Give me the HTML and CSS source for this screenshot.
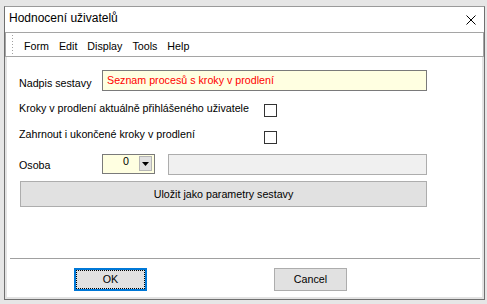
FILE: index.html
```html
<!DOCTYPE html>
<html lang="cs">
<head>
    <meta charset="UTF-8">
    <title>Hodnocení uživatelů</title>
    <link rel="stylesheet" href="styles.css">
</head>
<body>
    <div class="window">
        <div class="titlebar">
            <span class="title">Hodnocení uživatelů</span>
            <svg class="close" width="10" height="10" viewBox="0 0 10 10">
                <path d="M0.5 0.5 L9.5 9.5 M9.5 0.5 L0.5 9.5" stroke="#000" stroke-width="1" fill="none"/>
            </svg>
        </div>

        <div class="menubar">
            <span class="grip"></span>
            <span class="menu-item">Form</span>
            <span class="menu-item">Edit</span>
            <span class="menu-item">Display</span>
            <span class="menu-item">Tools</span>
            <span class="menu-item">Help</span>
        </div>

        <div class="client">
            <div class="content">
                <div class="row row-name">
                    <span class="label">Nadpis sestavy</span>
                    <div class="field field-name">Seznam procesů s kroky v prodlení</div>
                </div>

                <div class="row row-check">
                    <span class="label label-check">Kroky v prodlení aktuálně přihlášeného uživatele</span>
                    <span class="checkbox"></span>
                </div>

                <div class="row row-check second">
                    <span class="label label-check">Zahrnout i ukončené kroky v prodlení</span>
                    <span class="checkbox"></span>
                </div>

                <div class="row row-person">
                    <span class="label">Osoba</span>
                    <div class="combo">
                        <span class="combo-value">0</span>
                        <span class="combo-btn">
                            <svg width="7" height="4" viewBox="0 0 7 4"><polygon points="0,0 7,0 3.5,4" fill="#000"/></svg>
                        </span>
                    </div>
                    <div class="field field-person"></div>
                </div>

                <button class="save-btn">Uložit jako parametry sestavy</button>
            </div>

            <div class="footer">
                <div class="separator"></div>
                <div class="buttons">
                    <button class="btn btn-ok"><span class="focus">OK</span></button>
                    <button class="btn btn-cancel">Cancel</button>
                </div>
            </div>
        </div>
    </div>
</body>
</html>
```

FILE: styles.css
```css
body {
    margin: 0;
    background-color: #e6e6e6;
    font-family: "Liberation Sans", Arial, sans-serif;
    font-size: 10.7px;
    line-height: 13px;
    color: #000;
    height: 304px;
    overflow: hidden;
}
.window {
    margin: 6px 0 0 4px;
    width: 479px;
    height: 292px;
    border: 1px solid #707070;
    border-top-color: #9a9a9a;
    background-color: #fff;
    display: flex;
    flex-direction: column;
}
.titlebar {
    height: 25px;
    display: flex;
    justify-content: space-between;
    align-items: flex-start;
    flex-shrink: 0;
}
.title {
    font-size: 12px;
    line-height: 14px;
    padding: 4px 0 0 4px;
}
.close {
    margin: 8px 8px 0 0;
}
.menubar {
    height: 23px;
    border: 1px solid #a5a5a5;
    display: flex;
    align-items: flex-start;
    gap: 10px;
    flex-shrink: 0;
}
.grip {
    width: 1px;
    height: 19px;
    margin: 2px 1px 0 6px;
    background-image: repeating-linear-gradient(#a0a0a0 0 1px, transparent 1px 3px);
}
.menu-item {
    padding-top: 7px;
}
.client {
    flex: 1;
    border: 2px solid #e3e3e3;
    border-top: none;
    display: flex;
    flex-direction: column;
}
.content {
    padding: 13px 0 0 12px;
}
.row {
    display: flex;
    align-items: flex-start;
}
.label {
    width: 83px;
    flex-shrink: 0;
    white-space: nowrap;
}
.row-name .label {
    margin-top: 7px;
}
.field {
    box-sizing: border-box;
    border: 1px solid #7a7a7a;
    white-space: nowrap;
}
.field-name {
    width: 325px;
    height: 21px;
    padding: 3px 4px;
    background-color: #ffffe1;
    color: #ff0000;
}
.row-check {
    margin-top: 11px;
}
.label-check {
    width: 245px;
}
.checkbox {
    width: 13px;
    height: 13px;
    box-sizing: border-box;
    border: 1px solid #333;
    margin-top: 2px;
}
.row-check.second .checkbox {
    margin-top: 3px;
}
.row-person {
    margin-top: 10px;
}
.row-person .label {
    margin-top: 5px;
}
.combo {
    box-sizing: border-box;
    width: 53px;
    height: 20px;
    border: 1px solid #7a7a7a;
    background-color: #ffffe1;
    display: flex;
    align-items: flex-start;
}
.combo-value {
    flex: 1;
    text-align: right;
    padding-right: 10px;
}
.combo-btn {
    box-sizing: border-box;
    width: 13px;
    height: 15px;
    margin: 1px 2px 0 0;
    background-color: #e1e1e1;
    border: 1px solid #b5b5b5;
    display: flex;
    justify-content: center;
    align-items: center;
}
.field-person {
    width: 259px;
    height: 21px;
    margin-left: 13px;
    background-color: #f0f0f0;
    border-color: #adadad;
}
.save-btn {
    display: block;
    box-sizing: border-box;
    width: 407px;
    height: 26px;
    margin: 6px 0 0 1px;
    padding: 0;
    border: 1px solid #adadad;
    background-color: #e1e1e1;
    font: inherit;
    color: #000;
}
.footer {
    margin-top: auto;
    padding-bottom: 6px;
}
.separator {
    height: 1px;
    width: 470px;
    margin-left: 3px;
    background-color: #a0a0a0;
}
.buttons {
    display: flex;
    margin-top: 9px;
    padding-left: 67px;
    gap: 127px;
}
.btn {
    box-sizing: border-box;
    width: 73px;
    height: 23px;
    padding: 0;
    border: 1px solid #adadad;
    background-color: #e1e1e1;
    font: inherit;
    color: #000;
}
.btn-ok {
    border: 2px solid #0078d7;
    display: flex;
}
.focus {
    flex: 1;
    border: 1px dotted #000;
    display: flex;
    align-items: center;
    justify-content: center;
}
```
